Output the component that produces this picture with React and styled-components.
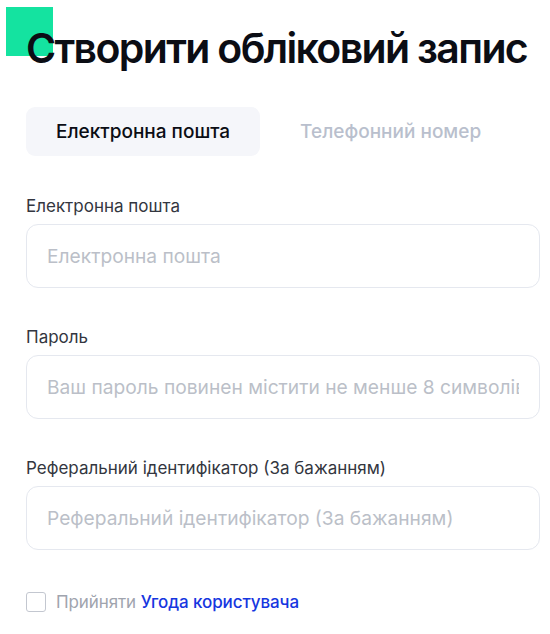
import React from 'react';
import styled, { createGlobalStyle } from 'styled-components';

const GlobalStyle = createGlobalStyle`
  body {
    margin: 0;
    background: #ffffff;
    font-family: Inter, "Noto Sans", sans-serif;
  }
`;

const Page = styled.div`
  position: relative;
  width: 550px;
  height: 634px;
  overflow: hidden;
  padding: 22px 10px 0 26px;
  box-sizing: border-box;
`;

const Badge = styled.div`
  position: absolute;
  left: 6px;
  top: 7px;
  width: 47px;
  height: 49px;
  background: #14e3a0;
`;

const Title = styled.h1`
  position: relative;
  margin: 0;
  font-size: 41px;
  line-height: 52px;
  font-weight: 600;
  letter-spacing: -1.65px;
  white-space: nowrap;
  color: #0b0d14;
`;

const Tabs = styled.div`
  display: flex;
  gap: 10px;
  margin-top: 33px;
`;

const Tab = styled.button`
  border: none;
  height: 49px;
  padding: 0 30px;
  border-radius: 9px;
  background: ${p => (p.$active ? '#f5f6fa' : 'transparent')};
  color: ${p => (p.$active ? '#0b0d14' : '#b9bfcd')};
  font-family: Inter, "Noto Sans", sans-serif;
  font-size: 19px;
  font-weight: 500;
  cursor: pointer;
`;

const Form = styled.div`
  display: flex;
  flex-direction: column;
  gap: 38px;
  margin-top: 39px;
`;

const Field = styled.div`
  display: flex;
  flex-direction: column;
  gap: 7px;
`;

const Label = styled.label`
  font-size: 17px;
  line-height: 22px;
  color: #333640;
`;

const Input = styled.input`
  height: 64px;
  box-sizing: border-box;
  width: 514px;
  border: 1px solid #e5e8ef;
  border-radius: 12px;
  padding: 0 20px;
  font-family: Inter, "Noto Sans", sans-serif;
  font-size: 19.2px;
  outline: none;
  &::placeholder {
    color: #bbbfc8;
  }
`;

const Agree = styled.div`
  display: flex;
  align-items: center;
  gap: 10px;
  margin-top: 42px;
  font-size: 17px;
  letter-spacing: -0.1px;
  color: #a0a4ae;
`;

const Box = styled.span`
  width: 18px;
  height: 18px;
  border: 1px solid #c3c7d0;
  border-radius: 3px;
`;

const Link = styled.a`
  color: #1636e0;
  font-weight: 500;
  text-decoration: none;
`;

export default function App() {
  return (
    <Page>
      <GlobalStyle />
      <Badge />
      <Title>Створити обліковий запис</Title>
      <Tabs>
        <Tab $active>Електронна пошта</Tab>
        <Tab>Телефонний номер</Tab>
      </Tabs>
      <Form>
        <Field>
          <Label>Електронна пошта</Label>
          <Input placeholder="Електронна пошта" />
        </Field>
        <Field>
          <Label>Пароль</Label>
          <Input type="password" placeholder="Ваш пароль повинен містити не менше 8 символів" />
        </Field>
        <Field>
          <Label>Реферальний ідентифікатор (За бажанням)</Label>
          <Input placeholder="Реферальний ідентифікатор (За бажанням)" />
        </Field>
      </Form>
      <Agree>
        <Box />
        <span>
          Прийняти <Link href="#">Угода користувача</Link>
        </span>
      </Agree>
    </Page>
  );
}
